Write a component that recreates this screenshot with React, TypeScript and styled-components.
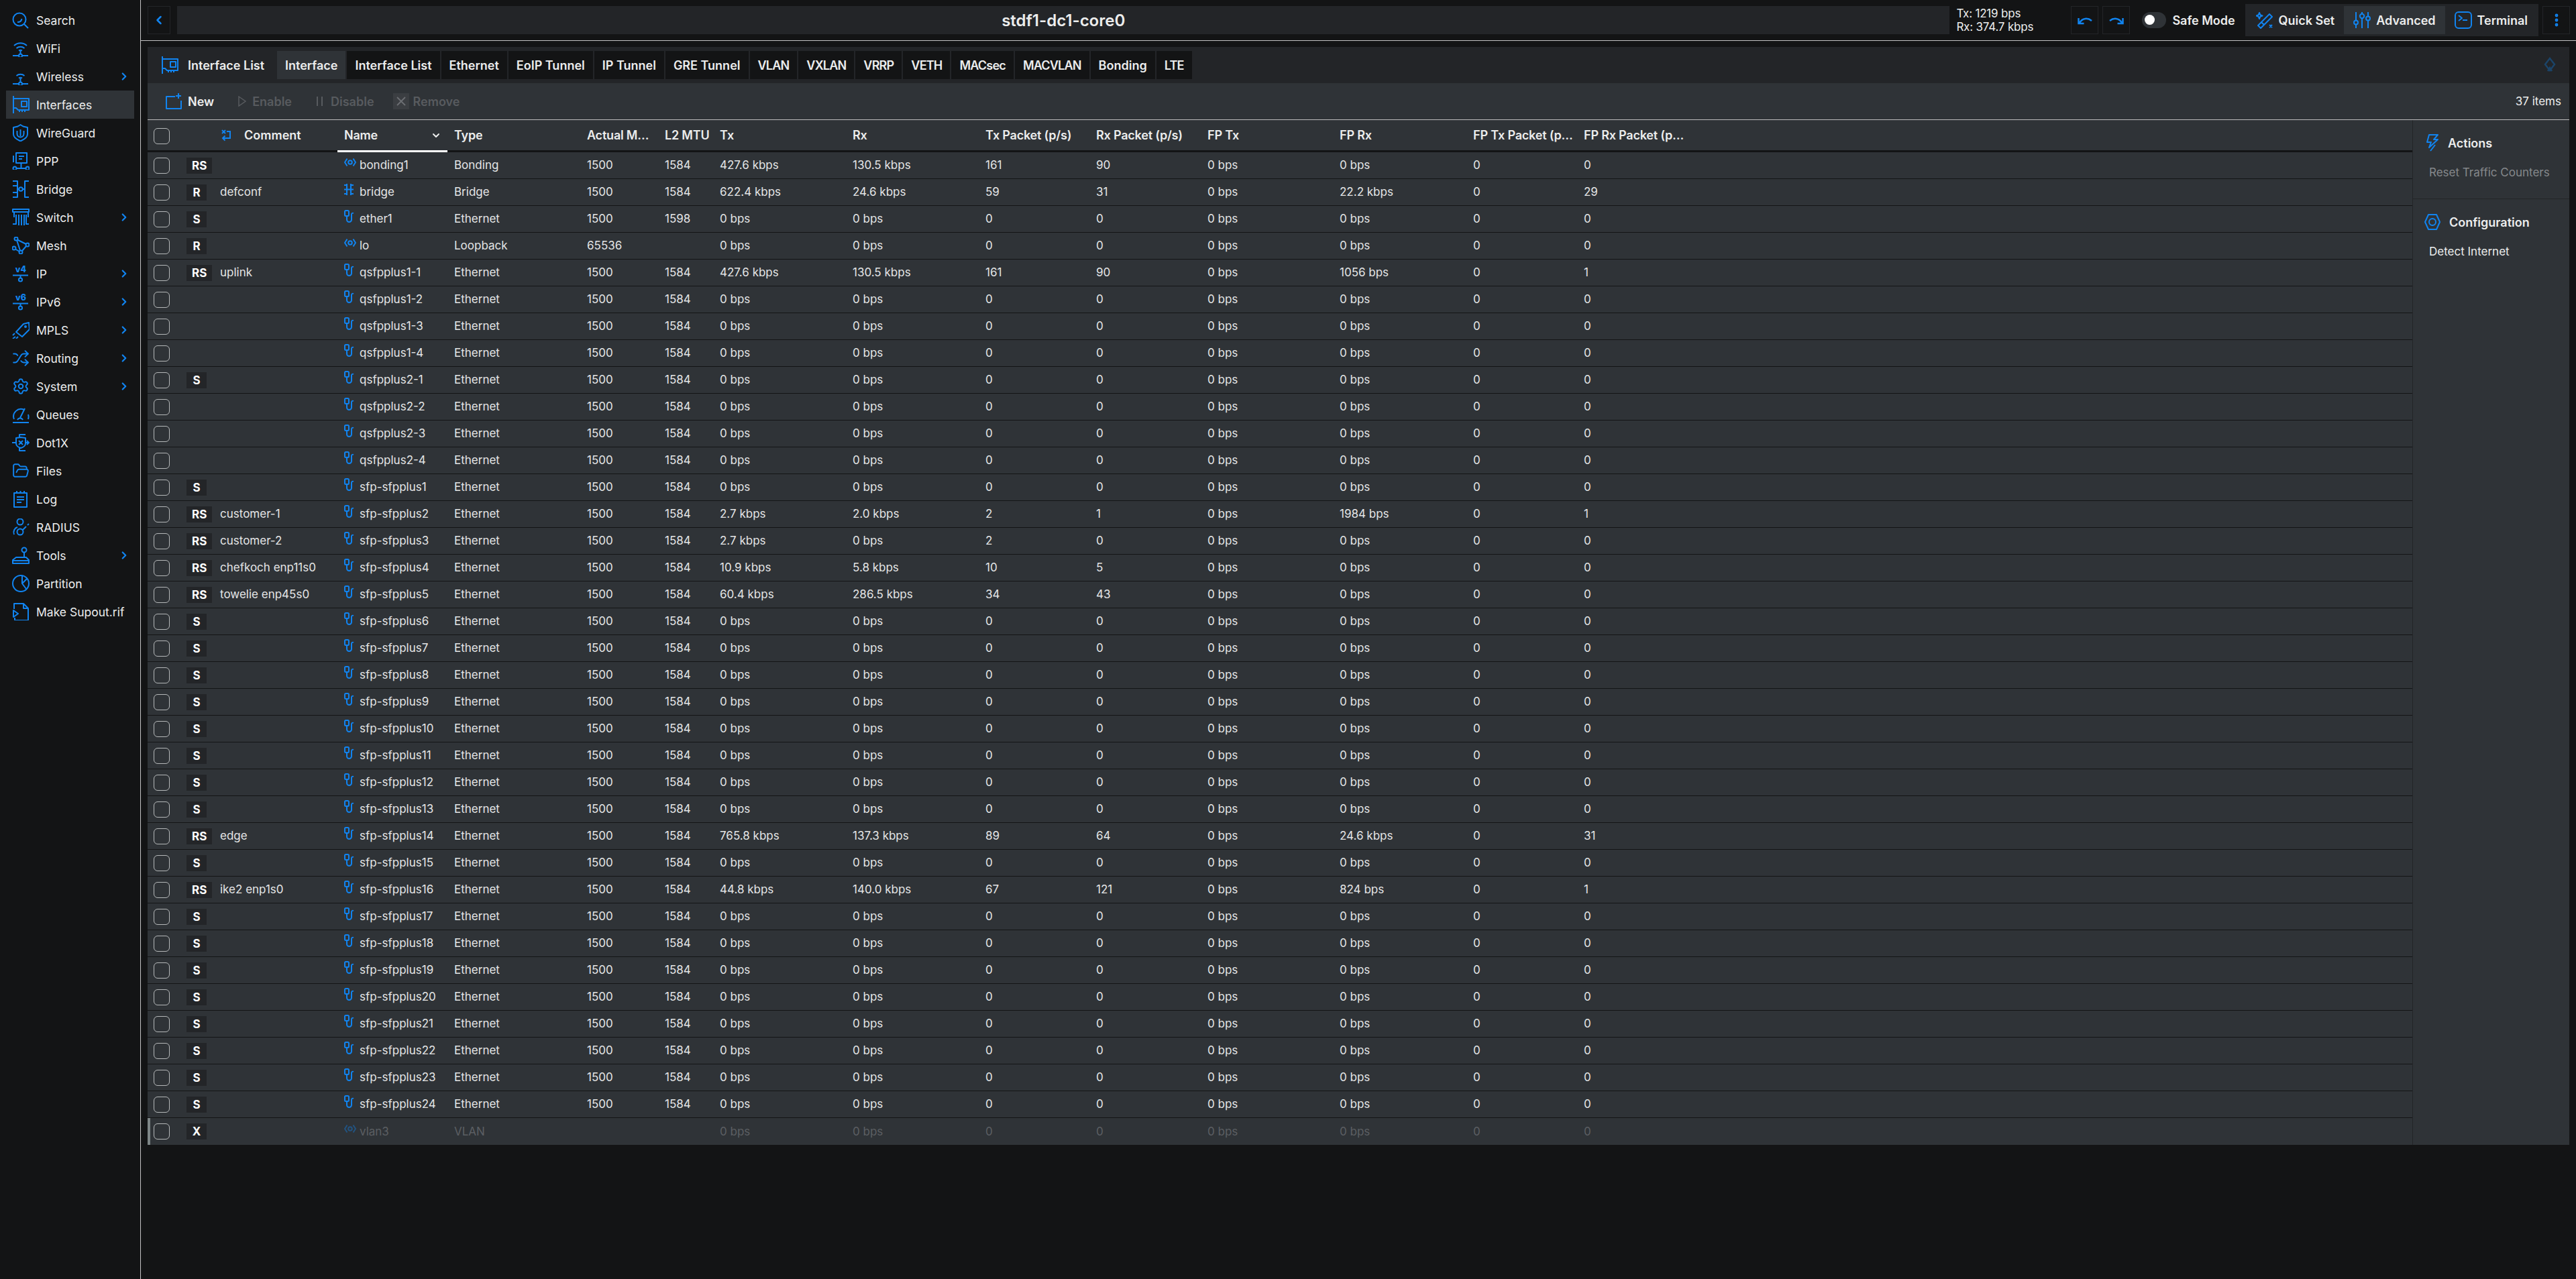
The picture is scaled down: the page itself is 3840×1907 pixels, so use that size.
import React from "react";
import styled, { createGlobalStyle } from "styled-components";
import { ChevronDown, ChevronLeft, ChevronRight, FolderOpen, MoreVertical, Settings, Shuffle } from "lucide-react";

const blue = "#1184f0";
const dark = "#131415";
const mid = "#232528";
const panel = "#2f3337";
const text = "#eceded";

const GlobalStyle = createGlobalStyle`
  html, body {
    margin: 0;
    background: ${dark};
    color: ${text};
    font-family: "Inter", "Noto Sans", sans-serif;
    font-size: 17px;
  }
  * { box-sizing: border-box; }
`;

const Page = styled.div`
  display: flex;
  min-height: 1907px;
`;

const Sidebar = styled.nav`
  width: 210px;
  flex: none;
  padding: 9px 9px 0;
  border-right: 1px solid #c4c4c4;
`;

const NavItem = styled.div<{ $active?: boolean }>`
  display: flex;
  align-items: center;
  height: 42px;
  padding-left: 9px;
  gap: 10px;
  font-size: 17.5px;
  background: ${({ $active }) => ($active ? panel : "transparent")};
  svg { flex: none; }
  .arrow { margin-left: auto; margin-right: 6px; color: ${blue}; }
`;

const Main = styled.div`
  flex: 1;
  min-width: 0;
  display: flex;
  flex-direction: column;
`;

const Topbar = styled.header`
  height: 61px;
  display: flex;
  align-items: center;
  padding: 0 9px 0 10px;
  border-bottom: 1px solid #c4c4c4;
`;

const SquareButton = styled.div<{ $width?: number }>`
  width: ${({ $width }) => $width ?? 41}px;
  height: 42px;
  flex: none;
  display: flex;
  align-items: center;
  justify-content: center;
  border: 1px solid ${mid};
  color: ${blue};
`;

const Identity = styled.div`
  flex: 1;
  height: 42px;
  margin: 0 10px;
  background: ${mid};
  display: flex;
  align-items: center;
  justify-content: center;
  font-size: 24px;
  font-weight: 600;
`;

const Rates = styled.div`
  width: 171px;
  flex: none;
  font-size: 17px;
  letter-spacing: -0.2px;
  line-height: 20px;
`;

const UndoGroup = styled.div`
  display: flex;
  gap: 6px;
`;

const SafeMode = styled.div`
  display: flex;
  align-items: center;
  gap: 9px;
  margin: 0 15px 0 18px;
  font-size: 18px;
  font-weight: 600;
`;

const Toggle = styled.div`
  width: 36px;
  height: 24px;
  border-radius: 12px;
  background: ${panel};
  padding: 4px;
  &::after {
    content: "";
    display: block;
    width: 15px;
    height: 15px;
    border-radius: 50%;
    background: #fff;
  }
`;

const ModeGroup = styled.div`
  display: flex;
  align-items: center;
  height: 48px;
  padding: 0 2px;
  margin-right: 6px;
  background: ${mid};
`;

const ModeButton = styled.div<{ $active?: boolean }>`
  display: flex;
  align-items: center;
  gap: 8px;
  height: 42px;
  padding: 0 14px;
  font-size: 18px;
  font-weight: 600;
  background: ${({ $active }) => ($active ? panel : "transparent")};
`;

const Content = styled.main`
  padding: 9px 10px 0;
`;

const Panel = styled.section`
  background: ${panel};
`;

const TabHeader = styled.div`
  height: 54px;
  display: flex;
  align-items: center;
  padding-left: 20px;
  padding-right: 20px;
  background: ${mid};
`;

const Heading = styled.div`
  display: flex;
  align-items: center;
  gap: 14px;
  width: 173px;
  flex: none;
  font-size: 18px;
  font-weight: 600;
`;

const Tabs = styled.div`
  display: flex;
  gap: 2px;
  background: ${mid};
`;

const Tab = styled.div<{ $active?: boolean; $caps?: boolean }>`
  height: 42px;
  padding: 0 12px;
  display: flex;
  align-items: center;
  font-size: 18px;
  font-weight: 600;
  letter-spacing: ${({ $caps }) => ($caps ? "-0.8px" : "0")};
  background: ${({ $active }) => ($active ? panel : dark)};
`;

const Pin = styled.div`
  margin-left: auto;
  color: #1b4468;
  display: flex;
`;

const Toolbar = styled.div`
  height: 55px;
  display: flex;
  align-items: center;
  padding: 0 12px 0 27px;
  gap: 36px;
  border-bottom: 1px solid #bdbdbd;
`;

const ToolButton = styled.div<{ $disabled?: boolean }>`
  display: flex;
  align-items: center;
  gap: 9px;
  font-size: 18px;
  font-weight: 600;
  color: ${({ $disabled }) => ($disabled ? "#585b5f" : text)};
`;

const RemoveBox = styled.span`
  width: 24px;
  height: 24px;
  margin-left: -8px;
  margin-right: -3px;
  background: #3b3e42;
  display: flex;
  align-items: center;
  justify-content: center;
`;

const ItemCount = styled.div`
  margin-left: auto;
  padding-bottom: 1px;
`;

const Body = styled.div`
  display: flex;
`;

const Table = styled.div`
  flex: 1;
  min-width: 0;
`;

const columns =
  "58px 50px 175px 164px 198px 116px 82px 198px 198px 165px 166px 197px 199px 165px 165px 1fr";

const HeaderRow = styled.div`
  display: grid;
  grid-template-columns: ${columns};
  height: 48px;
  border-bottom: 3px solid ${dark};
  font-size: 18px;
  font-weight: 600;
`;

const HeaderCell = styled.div<{ $sorted?: boolean; $pad?: number }>`
  display: flex;
  align-items: center;
  justify-content: space-between;
  height: 48px;
  padding: 0 ${({ $pad }) => $pad ?? 18}px 0 10px;
  min-width: 0;
  border-bottom: 3px solid ${({ $sorted }) => ($sorted ? "#fff" : dark)};
  span {
    white-space: nowrap;
    overflow: hidden;
    text-overflow: ellipsis;
    letter-spacing: -0.2px;
  }
  svg { flex: none; margin-right: -9px; }
`;

const CommentHeader = styled.div`
  display: flex;
  align-items: center;
  gap: 20px;
  height: 45px;
  padding-left: 2px;
  color: ${text};
`;

const Row = styled.div<{ $disabled?: boolean }>`
  display: grid;
  grid-template-columns: ${columns};
  height: 40px;
  border-bottom: 1px solid ${dark};
  color: ${({ $disabled }) => ($disabled ? "#5c5f63" : "#e4e5e6")};
  position: relative;
  &:last-child { border-bottom: none; }
`;

const DisabledBar = styled.span`
  position: absolute;
  left: 0;
  top: 0;
  bottom: 0;
  width: 4px;
  background: #7d8586;
`;

const CheckCell = styled.div`
  display: flex;
  align-items: center;
  padding-left: 9px;
`;

const Checkbox = styled.span`
  width: 24px;
  height: 24px;
  border: 1px solid #b5b8b9;
  border-radius: 6px;
`;

const FlagCell = styled.div`
  display: flex;
  align-items: center;
`;

const Flags = styled.span`
  min-width: 30px;
  height: 24px;
  padding: 0 8px;
  display: flex;
  align-items: center;
  justify-content: center;
  background: ${mid};
  color: #fff;
  font-weight: 700;
`;

const Cell = styled.div<{ $flush?: boolean }>`
  display: flex;
  align-items: center;
  padding-left: ${({ $flush }) => ($flush ? 0 : 10)}px;
  padding-bottom: 1px;
  white-space: nowrap;
`;

const NameIcon = styled.span<{ $dim?: boolean }>`
  width: 23px;
  flex: none;
  display: flex;
  margin-top: -8px;
  color: ${blue};
  opacity: ${({ $dim }) => ($dim ? 0.4 : 1)};
`;

const Aside = styled.aside`
  width: 234px;
  flex: none;
  border-left: 1px solid ${mid};
`;

const AsideSection = styled.div<{ $last?: boolean }>`
  padding: 21px 0 0 17px;
  height: ${({ $last }) => ($last ? "auto" : "118px")};
  border-bottom: ${({ $last }) => ($last ? "none" : `1px solid ${mid}`)};
`;

const AsideTitle = styled.div`
  display: flex;
  align-items: center;
  gap: 13px;
  height: 26px;
  font-size: 18px;
  font-weight: 600;
`;

const AsideLink = styled.div<{ $disabled?: boolean }>`
  margin-top: 21px;
  padding-left: 7px;
  color: ${({ $disabled }) => ($disabled ? "#85888b" : text)};
`;

type IconProps = { children: React.ReactNode; w?: number; h?: number };

const Ico = ({ children, w = 26, h = 26 }: IconProps) => (
  <svg width={w} height={h} viewBox={`0 0 ${w} ${h}`} fill="none" stroke={blue} strokeWidth="2" strokeLinejoin="round">
    {children}
  </svg>
);

const Version = ({ label }: { label: string }) => (
  <Ico>
    <text x="13" y="11" textAnchor="middle" fill={blue} stroke="none" fontFamily="Inter" fontWeight="800" fontSize="12.5">
      {label}
    </text>
    <path d="M1 15.5h23M12.5 15.5v4" />
    <circle cx="12.5" cy="22" r="2.6" />
  </Ico>
);

const navIcons: Record<string, React.ReactNode> = {
  Search: (
    <Ico>
      <circle cx="11" cy="12" r="9.5" />
      <path d="M18 19l6 6M8 16c3.5 0 6-2 6.500-5" />
    </Ico>
  ),
  WiFi: (
    <Ico>
      <path d="M3 9c5.500-5 13.500-5 19 0M6.500 13c3.500-3 8.500-3 12 0M10 16.500c1.500-1 3.500-1 5 0M12.500 17v5M1 24h9M15 24h9" />
      <circle cx="12.500" cy="24" r="2.500" />
    </Ico>
  ),
  Wireless: (
    <Ico>
      <path d="M6.500 12c3.500-3 8.500-3 12 0M10 15.500c1.500-1 3.500-1 5 0M12.500 16v6M1 24h9M15 24h9" />
      <circle cx="12.500" cy="24" r="2.500" />
    </Ico>
  ),
  Interfaces: (
    <Ico>
      <path d="M2 0v26M2 4h23v17H9l-3-3H2M11 21v3M15 21v3M19 21v3" />
      <rect x="14" y="8" width="8" height="8" />
    </Ico>
  ),
  WireGuard: (
    <Ico>
      <path d="M12.500 1l4 2.500 6.500 1.500v10c0 5-5 8-10.500 10.500C7 23 2 20 2 15V5l6.500-1.500z" />
      <path d="M7.500 10v4.500a5 5 0 0 0 10 0V10M12.500 8v10" />
    </Ico>
  ),
  PPP: (
    <Ico>
      <rect x="6" y="1" width="16" height="15" />
      <path d="M2 5v10M10 6h8M10 10h5M13.500 16v8M6.500 24h14" />
      <circle cx="4" cy="24" r="2.500" />
      <circle cx="23" cy="24" r="2.500" />
    </Ico>
  ),
  Bridge: (
    <Ico>
      <path d="M1 1h7v24H1M1 8h7M1 18h7M8 13h2M25 1h-6v24h6M16 13h3" />
      <circle cx="13" cy="13" r="2.800" />
    </Ico>
  ),
  Switch: (
    <Ico>
      <rect x="1" y="1" width="24" height="4" />
      <path d="M3 5v8M1 23h5V9M10 9v16M14 9v16M18 9v16M25 23h-4V9M24 5v8" />
    </Ico>
  ),
  Mesh: (
    <Ico>
      <circle cx="6" cy="3" r="2.500" />
      <circle cx="23" cy="12" r="2.500" />
      <circle cx="3" cy="17" r="2.500" />
      <circle cx="13" cy="23" r="2.500" />
      <path d="M8 4.500l13 6.500M21 14l-6 7M7 5l5 15.500M5 18.500l6 3.500" />
    </Ico>
  ),
  IP: <Version label="v4" />,
  IPv6: <Version label="v6" />,
  MPLS: (
    <Ico>
      <path d="M6 16L17 4l8-2 1 10-11 11z" />
      <circle cx="20" cy="8" r="1" />
      <path d="M1 26l4-3M6 26l3-3M1 21l3-3" />
    </Ico>
  ),
  Routing: <Shuffle size={26} color={blue} strokeWidth={1.8} />,
  System: <Settings size={26} color={blue} strokeWidth={1.8} />,
  Queues: (
    <Ico>
      <path d="M3 20a11 11 0 0 1 15-14M24 13a11 11 0 0 1 0 7M12 18l7-14M8 21a4.500 4.500 0 0 1 8 0M1 25h24" />
    </Ico>
  ),
  Dot1X: (
    <Ico>
      <path d="M6 6l7-1 7 1v8c0 3-3 6-7 7-4-1-7-4-7-7zM10 10l6 6M16 10l-6 6M0 13h5M20 13h5M22 10l3 3-3 3M11 5V1h9M11 21v4h9" />
    </Ico>
  ),
  Files: <FolderOpen size={26} color={blue} strokeWidth={1.8} />,
  Log: (
    <Ico>
      <rect x="3" y="4" width="19" height="21" />
      <path d="M7 1v3M12.500 1v3M18 1v3M7 10h11M7 14h11M7 18h7" />
    </Ico>
  ),
  RADIUS: (
    <Ico>
      <circle cx="12" cy="5" r="4.500" />
      <circle cx="12" cy="20" r="4.500" />
      <path d="M3 24c-2-5 1-10 5-11M16 17l5-5M23 10l2-2" />
    </Ico>
  ),
  Tools: (
    <Ico>
      <circle cx="18" cy="5" r="3.500" />
      <path d="M18 9v7M6 16h15l4 4v5H1v-5zM1 21h24" />
    </Ico>
  ),
  Partition: (
    <Ico>
      <circle cx="13" cy="13" r="12" />
      <path d="M15 2v11l6 8M15 13l7-7" />
    </Ico>
  ),
  "Make Supout.rif": (
    <Ico>
      <path d="M3 9V1h14l7 7v18H4v-4M17 1v7h7M2 11l7 5-7 5z" />
    </Ico>
  ),
};

const menu: [string, boolean?][] = [
  ["Search"], ["WiFi"], ["Wireless", true], ["Interfaces"], ["WireGuard"], ["PPP"], ["Bridge"],
  ["Switch", true], ["Mesh"], ["IP", true], ["IPv6", true], ["MPLS", true], ["Routing", true],
  ["System", true], ["Queues"], ["Dot1X"], ["Files"], ["Log"], ["RADIUS"], ["Tools", true],
  ["Partition"], ["Make Supout.rif"],
];

const tabs = ["Interface", "Interface List", "Ethernet", "EoIP Tunnel", "IP Tunnel", "GRE Tunnel", "VLAN", "VXLAN", "VRRP", "VETH", "MACsec", "MACVLAN", "Bonding", "LTE"];

const capsTabs = ["VLAN", "VXLAN", "VRRP", "VETH", "MACsec", "MACVLAN", "LTE"];

const heads: { label: string; pad?: number }[] = [
  { label: "Type" },
  { label: "Actual MTU", pad: 12 },
  { label: "L2 MTU", pad: 0 },
  { label: "Tx" },
  { label: "Rx" },
  { label: "Tx Packet (p/s)" },
  { label: "Rx Packet (p/s)" },
  { label: "FP Tx" },
  { label: "FP Rx" },
  { label: "FP Tx Packet (p/s)", pad: 5 },
  { label: "FP Rx Packet (p/s)", pad: 5 },
];

const BondIcon = ({ dim }: { dim?: boolean }) => (
  <NameIcon $dim={dim}>
    <svg width="18" height="14" viewBox="0 0 18 14" fill="none" stroke={blue} strokeWidth="2">
      <path d="M4.500 1.500L1 7l3.500 5.500M13.500 1.500L17 7l-3.500 5.500" />
      <circle cx="9" cy="7" r="2.800" />
    </svg>
  </NameIcon>
);

const BridgeIcon = () => (
  <NameIcon>
    <svg width="14" height="17" viewBox="0 0 14 17" fill="none" stroke={blue} strokeWidth="2">
      <path d="M4 0v17M10 0v17M0 2h4M10 2h4M0 15h4M10 15h4M0 8.500h14" />
    </svg>
  </NameIcon>
);

const EtherIcon = () => (
  <NameIcon>
    <svg width="15" height="19" viewBox="0 0 15 19" fill="none" stroke={blue} strokeWidth="2">
      <rect x="1" y="1" width="6" height="8" rx="1.500" />
      <path d="M4 9v5.500a3.500 3.500 0 0 0 7 0V6.500a2 2 0 0 1 3-1.500" />
    </svg>
  </NameIcon>
);

type Data = {
  flags: string;
  comment: string;
  name: string;
  type: string;
  values: string[];
};

const idle = ["1500", "1584", "0 bps", "0 bps", "0", "0", "0 bps", "0 bps", "0", "0"];

const traffic = (tx: string, rx: string, txp: string, rxp: string, fprx = "0 bps", fprxp = "0") => [
  "1500", "1584", tx, rx, txp, rxp, "0 bps", fprx, "0", fprxp,
];

const eth = (flags: string, comment: string, name: string, values = idle): Data => ({
  flags, comment, name, type: "Ethernet", values,
});

const rows: Data[] = [
  { flags: "RS", comment: "", name: "bonding1", type: "Bonding", values: traffic("427.6 kbps", "130.5 kbps", "161", "90") },
  { flags: "R", comment: "defconf", name: "bridge", type: "Bridge", values: traffic("622.4 kbps", "24.6 kbps", "59", "31", "22.2 kbps", "29") },
  eth("S", "", "ether1", ["1500", "1598", ...idle.slice(2)]),
  { flags: "R", comment: "", name: "lo", type: "Loopback", values: ["65536", "", ...idle.slice(2)] },
  eth("RS", "uplink", "qsfpplus1-1", traffic("427.6 kbps", "130.5 kbps", "161", "90", "1056 bps", "1")),
  eth("", "", "qsfpplus1-2"),
  eth("", "", "qsfpplus1-3"),
  eth("", "", "qsfpplus1-4"),
  eth("S", "", "qsfpplus2-1"),
  eth("", "", "qsfpplus2-2"),
  eth("", "", "qsfpplus2-3"),
  eth("", "", "qsfpplus2-4"),
  eth("S", "", "sfp-sfpplus1"),
  eth("RS", "customer-1", "sfp-sfpplus2", traffic("2.7 kbps", "2.0 kbps", "2", "1", "1984 bps", "1")),
  eth("RS", "customer-2", "sfp-sfpplus3", traffic("2.7 kbps", "0 bps", "2", "0")),
  eth("RS", "chefkoch enp11s0", "sfp-sfpplus4", traffic("10.9 kbps", "5.8 kbps", "10", "5")),
  eth("RS", "towelie enp45s0", "sfp-sfpplus5", traffic("60.4 kbps", "286.5 kbps", "34", "43")),
  ...[6, 7, 8, 9, 10, 11, 12, 13].map((n) => eth("S", "", `sfp-sfpplus${n}`)),
  eth("RS", "edge", "sfp-sfpplus14", traffic("765.8 kbps", "137.3 kbps", "89", "64", "24.6 kbps", "31")),
  eth("S", "", "sfp-sfpplus15"),
  eth("RS", "ike2 enp1s0", "sfp-sfpplus16", traffic("44.8 kbps", "140.0 kbps", "67", "121", "824 bps", "1")),
  ...[17, 18, 19, 20, 21, 22, 23, 24].map((n) => eth("S", "", `sfp-sfpplus${n}`)),
  { flags: "X", comment: "", name: "vlan3", type: "VLAN", values: ["", "", ...idle.slice(2)] },
];

const nameIcon = (row: Data) => {
  if (row.type === "Ethernet") return <EtherIcon />;
  if (row.type === "Bridge") return <BridgeIcon />;
  return <BondIcon dim={row.type === "VLAN"} />;
};

const App = () => (
  <Page>
    <GlobalStyle />
    <Sidebar>
      {menu.map(([label, more]) => (
        <NavItem key={label} $active={label === "Interfaces"}>
          {navIcons[label]}
          {label}
          {more && <ChevronRight className="arrow" size={18} strokeWidth={3} />}
        </NavItem>
      ))}
    </Sidebar>
    <Main>
      <Topbar>
        <SquareButton $width={34}>
          <ChevronLeft size={20} strokeWidth={3} />
        </SquareButton>
        <Identity>stdf1-dc1-core0</Identity>
        <Rates>
          <div>Tx: 1219 bps</div>
          <div>Rx: 374.7 kbps</div>
        </Rates>
        <UndoGroup>
          <SquareButton>
            <svg width="22" height="16" viewBox="0 0 22 16" fill="none" stroke={blue} strokeWidth="2.500">
              <path d="M3 12C7 5 15 4 21 9M1.500 5v8h8" />
            </svg>
          </SquareButton>
          <SquareButton>
            <svg width="22" height="16" viewBox="0 0 22 16" fill="none" stroke={blue} strokeWidth="2.500">
              <path d="M19 12C15 5 7 4 1 9M20.500 5v8h-8" />
            </svg>
          </SquareButton>
        </UndoGroup>
        <SafeMode>
          <Toggle />
          Safe Mode
        </SafeMode>
        <ModeGroup>
          <ModeButton>
            <Ico>
              <path d="M3 21L20 4l4 4L7 25zM8 16l4 4M5 2l1.300 3.200L9.500 6.500 6.300 7.800 5 11 3.700 7.800.5 6.500l3.200-1.300zM20 20l4 4M24 20l-4 4" />
            </Ico>
            Quick Set
          </ModeButton>
          <ModeButton $active>
            <Ico>
              <path d="M4 1v12M4 20v5M13 1v2M13 11v14M22 1v6M22 14v11" />
              <circle cx="4" cy="16.500" r="3" />
              <circle cx="13" cy="7" r="3.200" />
              <circle cx="22" cy="10.500" r="3" />
            </Ico>
            Advanced
          </ModeButton>
          <ModeButton>
            <Ico>
              <rect x="1" y="1" width="24" height="24" rx="5" />
              <path d="M6 6l5 4-5 4M12 13h7" />
            </Ico>
            Terminal
          </ModeButton>
        </ModeGroup>
        <SquareButton>
          <MoreVertical size={24} strokeWidth={2.800} />
        </SquareButton>
      </Topbar>
      <Content>
        <Panel>
          <TabHeader>
            <Heading>
              {navIcons.Interfaces}
              Interface List
            </Heading>
            <Tabs>
              {tabs.map((tab, i) => (
                <Tab key={i} $active={i === 0} $caps={capsTabs.includes(tab)}>
                  {tab}
                </Tab>
              ))}
            </Tabs>
            <Pin>
              <svg width="18" height="24" viewBox="0 0 18 24" fill="none" stroke="currentColor" strokeWidth="2.500">
                <path d="M9 2l7 9-7 9-7-9zM6 21l3-5 3 5" />
              </svg>
            </Pin>
          </TabHeader>
          <Toolbar>
            <ToolButton>
              <Ico w={24} h={24}>
                <path d="M14 5H1v18h22V11M19 0v8M15 4h8" />
              </Ico>
              New
            </ToolButton>
            <ToolButton $disabled>
              <svg width="12" height="16" viewBox="0 0 12 16" fill="none" stroke="#585b5f" strokeWidth="1.500">
                <path d="M1 1l10 7-10 7z" />
              </svg>
              Enable
            </ToolButton>
            <ToolButton $disabled>
              <svg width="13" height="16" viewBox="0 0 13 16" fill="none" stroke="#585b5f" strokeWidth="2">
                <path d="M2 1v14M9 1v14" />
              </svg>
              Disable
            </ToolButton>
            <ToolButton $disabled>
              <RemoveBox>
                <svg width="14" height="14" viewBox="0 0 14 14" fill="none" stroke="#6c6f73" strokeWidth="1.800">
                  <path d="M1 1l12 12M13 1L1 13" />
                </svg>
              </RemoveBox>
              Remove
            </ToolButton>
            <ItemCount>37 items</ItemCount>
          </Toolbar>
          <Body>
            <Table>
              <HeaderRow>
                <CheckCell>
                  <Checkbox />
                </CheckCell>
                <div />
                <CommentHeader>
                  <svg width="14" height="18" viewBox="0 0 14 18" fill="none" stroke={blue} strokeWidth="2">
                    <path d="M1 1l5 5M6 1L1 6M8 3h5v10H2M5.500 9.500L2 13l3.500 3.500" />
                  </svg>
                  Comment
                </CommentHeader>
                <HeaderCell $sorted>
                  <span>Name</span>
                  <ChevronDown size={16} strokeWidth={3} />
                </HeaderCell>
                {heads.map((head) => (
                  <HeaderCell key={head.label} $pad={head.pad}>
                    <span>{head.label}</span>
                  </HeaderCell>
                ))}
              </HeaderRow>
              {rows.map((row) => (
                <Row key={row.name} $disabled={row.flags === "X"}>
                  {row.flags === "X" && <DisabledBar />}
                  <CheckCell>
                    <Checkbox />
                  </CheckCell>
                  <FlagCell>{row.flags && <Flags>{row.flags}</Flags>}</FlagCell>
                  <Cell $flush>{row.comment}</Cell>
                  <Cell>
                    {nameIcon(row)}
                    {row.name}
                  </Cell>
                  <Cell>{row.type}</Cell>
                  {row.values.map((value, i) => (
                    <Cell key={i}>{value}</Cell>
                  ))}
                </Row>
              ))}
            </Table>
            <Aside>
              <AsideSection>
                <AsideTitle>
                  <Ico w={22} h={26}>
                    <path d="M7 1h13l-6 7h6L7 20l3-8H4zM16 16l-7 9" />
                  </Ico>
                  Actions
                </AsideTitle>
                <AsideLink $disabled>Reset Traffic Counters</AsideLink>
              </AsideSection>
              <AsideSection $last>
                <AsideTitle>
                  <Ico w={24} h={26}>
                    <path d="M6 2h12l5 11-5 11H6L1 13z" />
                    <circle cx="12" cy="13" r="5" />
                  </Ico>
                  Configuration
                </AsideTitle>
                <AsideLink>Detect Internet</AsideLink>
              </AsideSection>
            </Aside>
          </Body>
        </Panel>
      </Content>
    </Main>
  </Page>
);

export default App;
